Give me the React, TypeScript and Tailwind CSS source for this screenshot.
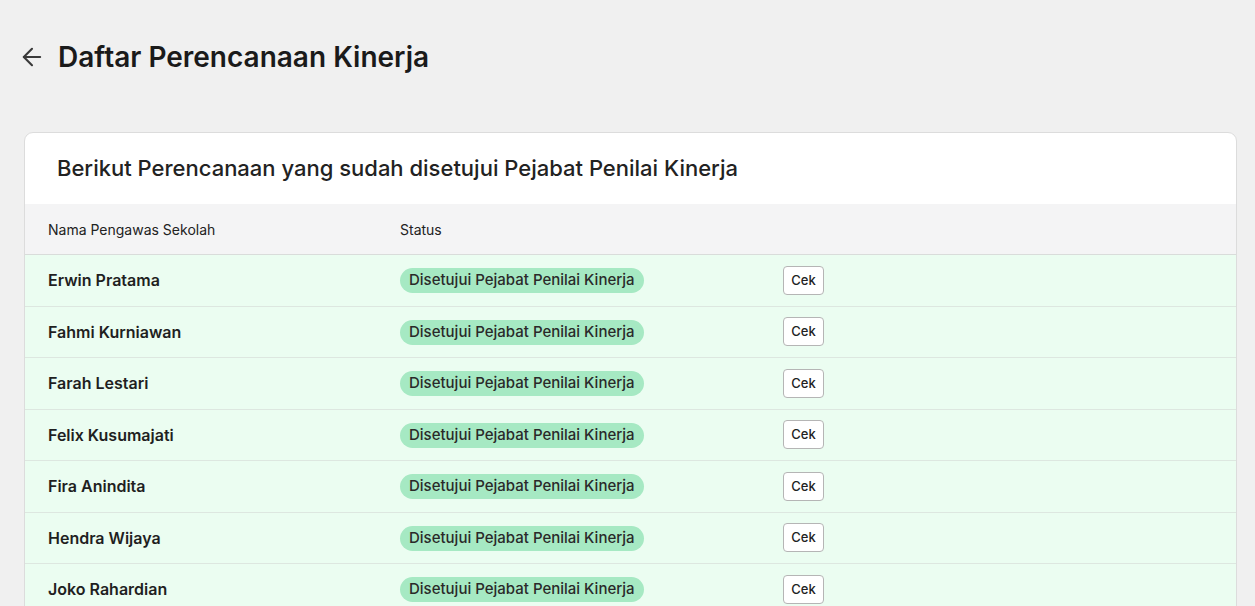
import { ArrowLeft } from "lucide-react";

const rows = [
  "Erwin Pratama",
  "Fahmi Kurniawan",
  "Farah Lestari",
  "Felix Kusumajati",
  "Fira Anindita",
  "Hendra Wijaya",
  "Joko Rahardian",
];

export default function App() {
  return (
    <div
      className="min-h-screen bg-[#f0f0f0] pt-[37px] px-[24px]"
      style={{ fontFamily: "Inter, 'Noto Sans', sans-serif" }}
    >
      <div className="flex items-center gap-[12px] h-[40px] -ml-[6px]">
        <ArrowLeft className="w-[28px] h-[28px] text-[#3a3a3a]" strokeWidth={1.8} />
        <h1 className="text-[28px] font-semibold text-[#1a1a1a]">
          Daftar Perencanaan Kinerja
        </h1>
      </div>

      <div className="mt-[55px] mr-[-6px] bg-white rounded-[9px] border border-[#dcdcdc] overflow-hidden">
        <div className="h-[71px] flex items-center px-[32px]">
          <h2 className="text-[22px] font-medium text-[#222]">
            Berikut Perencanaan yang sudah disetujui Pejabat Penilai Kinerja
          </h2>
        </div>
        <div className="h-[51px] flex items-center bg-[#f4f4f5] border-b border-[#d9dcda] text-[14px] text-[#222]">
          <div className="w-[375px] pl-[23px]">Nama Pengawas Sekolah</div>
          <div>Status</div>
        </div>
        {rows.map((name) => (
          <div
            key={name}
            className="h-[51.5px] flex items-center bg-[#ebfdf1] border-b border-[#dde7e0]"
          >
            <div className="w-[375px] pl-[23px] text-[16px] font-semibold text-[#1f1f1f]">
              {name}
            </div>
            <div className="w-[383px]">
              <span className="inline-flex items-center h-[25px] px-[9px] rounded-full bg-[#a6e9c3] text-[15px] font-medium text-[#2a2a2a]">
                Disetujui Pejabat Penilai Kinerja
              </span>
            </div>
            <button className="h-[29px] w-[41px] rounded-[4px] border border-[#b5b5b5] bg-white text-[13px] font-medium text-[#222]">
              Cek
            </button>
          </div>
        ))}
      </div>
    </div>
  );
}
